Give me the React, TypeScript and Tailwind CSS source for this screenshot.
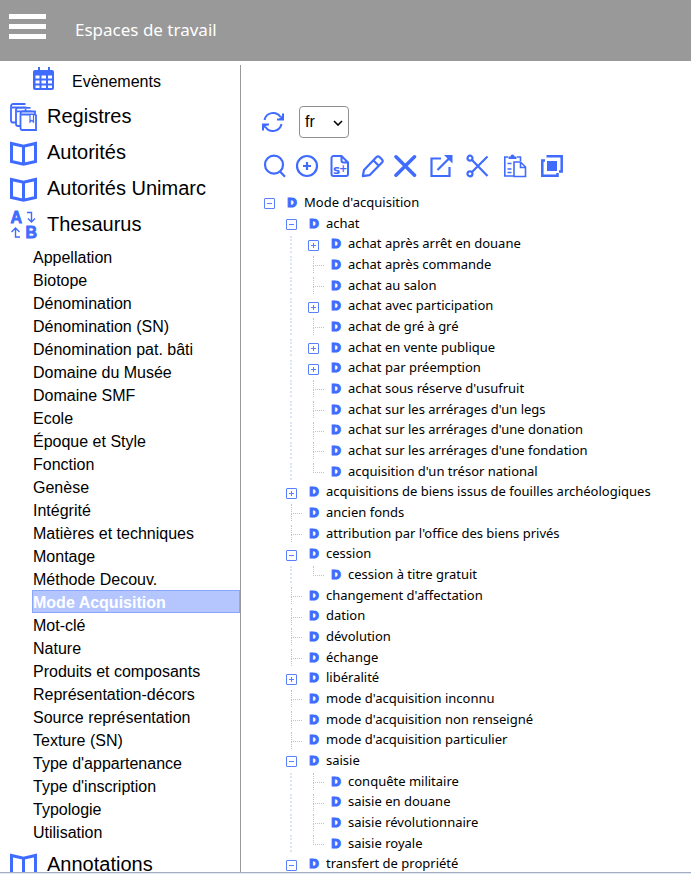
import { useState, type ReactNode } from 'react';
import clsx from 'clsx';

type Guide = 'tee' | 'end' | 'open' | 'closed';

interface TreeNode {
  label: string;
  depth: number;
  guide: Guide;
}

const THESAURUS = [
  'Appellation',
  'Biotope',
  'Dénomination',
  'Dénomination (SN)',
  'Dénomination pat. bâti',
  'Domaine du Musée',
  'Domaine SMF',
  'Ecole',
  'Époque et Style',
  'Fonction',
  'Genèse',
  'Intégrité',
  'Matières et techniques',
  'Montage',
  'Méthode Decouv.',
  'Mode Acquisition',
  'Mot-clé',
  'Nature',
  'Produits et composants',
  'Représentation-décors',
  'Source représentation',
  'Texture (SN)',
  "Type d'appartenance",
  "Type d'inscription",
  'Typologie',
  'Utilisation',
];

const TREE: TreeNode[] = [
  { label: "Mode d'acquisition", depth: 0, guide: 'open' },
  { label: 'achat', depth: 1, guide: 'open' },
  { label: 'achat après arrêt en douane', depth: 2, guide: 'closed' },
  { label: 'achat après commande', depth: 2, guide: 'tee' },
  { label: 'achat au salon', depth: 2, guide: 'tee' },
  { label: 'achat avec participation', depth: 2, guide: 'closed' },
  { label: 'achat de gré à gré', depth: 2, guide: 'tee' },
  { label: 'achat en vente publique', depth: 2, guide: 'closed' },
  { label: 'achat par préemption', depth: 2, guide: 'closed' },
  { label: "achat sous réserve d'usufruit", depth: 2, guide: 'tee' },
  { label: "achat sur les arrérages d'un legs", depth: 2, guide: 'tee' },
  { label: "achat sur les arrérages d'une donation", depth: 2, guide: 'tee' },
  { label: "achat sur les arrérages d'une fondation", depth: 2, guide: 'tee' },
  { label: "acquisition d'un trésor national", depth: 2, guide: 'end' },
  { label: 'acquisitions de biens issus de fouilles archéologiques', depth: 1, guide: 'closed' },
  { label: 'ancien fonds', depth: 1, guide: 'tee' },
  { label: "attribution par l'office des biens privés", depth: 1, guide: 'tee' },
  { label: 'cession', depth: 1, guide: 'open' },
  { label: 'cession à titre gratuit', depth: 2, guide: 'end' },
  { label: "changement d'affectation", depth: 1, guide: 'tee' },
  { label: 'dation', depth: 1, guide: 'tee' },
  { label: 'dévolution', depth: 1, guide: 'tee' },
  { label: 'échange', depth: 1, guide: 'tee' },
  { label: 'libéralité', depth: 1, guide: 'closed' },
  { label: "mode d'acquisition inconnu", depth: 1, guide: 'tee' },
  { label: "mode d'acquisition non renseigné", depth: 1, guide: 'tee' },
  { label: "mode d'acquisition particulier", depth: 1, guide: 'tee' },
  { label: 'saisie', depth: 1, guide: 'open' },
  { label: 'conquête militaire', depth: 2, guide: 'tee' },
  { label: 'saisie en douane', depth: 2, guide: 'tee' },
  { label: 'saisie révolutionnaire', depth: 2, guide: 'tee' },
  { label: 'saisie royale', depth: 2, guide: 'end' },
  { label: 'transfert de propriété', depth: 1, guide: 'open' },
];

function CalendarIcon() {
  return (
    <svg width="22" height="24" viewBox="0 0 22 24" fill="#406bff">
      <path d="M5 0h2v3h8V0h2v3h2a2 2 0 0 1 2 2v16a2 2 0 0 1-2 2H2a2 2 0 0 1-2-2V5a2 2 0 0 1 2-2h3z" />
      <path
        fill="#fff"
        d="M2.500 8.500h4v3h-4zM8.500 8.500h4.500v3H8.500zM15 8.500h4v3h-4zM2.500 13.500h4v3h-4zM8.500 13.500h4.500v3H8.500zM15 13.500h4v3h-4zM2.500 18.500h4V21h-4zM8.500 18.500h4.500V21H8.500zM15 18.500h4V21h-4z"
      />
    </svg>
  );
}

function RegistersIcon() {
  return (
    <svg width="27" height="28" viewBox="0 0 27 28" fill="#fff" stroke="#406bff" strokeWidth="1.800">
      <path d="M15.500 1H3a2 2 0 0 0-2 2V17.500a2 2 0 0 0 2 2H15.500V4.500H2" />
      <path d="M20.500 4.800H8a2 2 0 0 0-2 2V21a2 2 0 0 0 2 2H20.500V8.300H7" />
      <path d="M26 11.500V27H12.500a2 2 0 0 1-2-2V10.500a2 2 0 0 1 2-2H25V11.500H11.500" />
      <path d="M20 12v7l1.700-1.700L23.500 19v-7" strokeWidth="1.200" />
    </svg>
  );
}

function BookIcon() {
  return (
    <svg width="27" height="25" viewBox="0 0 27 25" fill="none" stroke="#406bff" strokeWidth="3">
      <path d="M1.500 2.500 13.500 5.300 25.500 2.500V20.500L13.500 23.200 1.500 20.500ZM13.500 5.300V23" />
    </svg>
  );
}

function ThesaurusIcon() {
  return (
    <svg
      width="28"
      height="32"
      viewBox="0 -2 28 32"
      fill="none"
      stroke="#406bff"
      strokeWidth="1.400"
      className="-mr-px overflow-visible"
    >
      <g fill="#406bff" strokeWidth=".8" fontFamily="'Liberation Sans', Arial, sans-serif" fontWeight="700" fontSize="16">
        <text x=".5" y="12">A</text>
        <text x="15.500" y="27">B</text>
      </g>
      <path d="M17 1.500h4.500v9M18 7.500l3.500 3.500L25 7.500M10 26H5.500V17.500M1.500 21l4-4 4 4" />
    </svg>
  );
}

function RefreshIcon() {
  return (
    <svg width="24" height="22" viewBox="0 0 24 22" fill="none" stroke="#406bff" strokeWidth="2">
      <path d="M3.500 9A8.800 8.800 0 0 1 19.500 6M20.500 13A8.800 8.800 0 0 1 4.500 16" />
      <path d="M22 2.500v6h-6M2 19.500v-6h6" />
      <path d="M22 3.500v5h-4.500zM2 18.500v-5h4.500z" fill="#406bff" stroke="none" />
    </svg>
  );
}

function Glyph({ children }: { children: ReactNode }) {
  return (
    <svg width="24" height="24" viewBox="0 0 24 24" fill="none" stroke="#406bff" strokeWidth="2.200">
      {children}
    </svg>
  );
}

const EDIT_TOOLS: { name: string; icon: ReactNode }[] = [
  {
    name: 'Rechercher',
    icon: <path d="M18 17.500 23 22.800M21 10.700a9 9 0 1 1-18 0 9 9 0 0 1 18 0Z" />,
  },
  {
    name: 'Ajouter',
    icon: (
      <>
        <circle cx="12" cy="12" r="10" />
        <path d="M12 8v8M8 12h8" />
      </>
    ),
  },
  {
    name: 'Ajouter un synonyme',
    icon: (
      <>
        <path
          strokeWidth="2"
          d="M13.500 2H5.500A2 2 0 0 0 3.500 4V20a2 2 0 0 0 2 2H18a2 2 0 0 0 2-2V8.500ZM13.500 2V6.500a2 2 0 0 0 2 2H20"
        />
        <g fill="#406bff" stroke="none" fontFamily="'DejaVu Sans', sans-serif" fontWeight="700">
          <text x="5" y="20" fontSize="12">s</text>
          <text x="11" y="18" fontSize="10">+</text>
        </g>
      </>
    ),
  },
  {
    name: 'Modifier',
    icon: (
      <path
        strokeLinejoin="round"
        d="M1.800 22.200 3 16 15.500 3a2.200 2.200 0 0 1 3 0L21 5.500a2.200 2.200 0 0 1 0 3L8.500 21.200ZM12.500 6.500l5.500 5.500"
      />
    ),
  },
  {
    name: 'Supprimer',
    icon: <path strokeWidth="3.500" strokeLinecap="round" d="M2 2.800 20.500 21.200M20.500 2.800 2 21.200" />,
  },
];

const CLIP_TOOLS: { name: string; icon: ReactNode }[] = [
  {
    name: 'Exporter',
    icon: (
      <>
        <path d="M12 4.500H2.500V22H20.500V13M8.500 16 21 3.500" />
        <path d="M15 1h8.500v8.500L20.500 6.500 18 4z" fill="#406bff" stroke="none" />
      </>
    ),
  },
  {
    name: 'Couper',
    icon: (
      <>
        <circle cx="4" cy="4.200" r="2.500" />
        <circle cx="4" cy="19.800" r="2.500" />
        <path d="M6 6 21.500 22M6 18 21.500 2.500" />
      </>
    ),
  },
  {
    name: 'Coller',
    icon: (
      <>
        <path strokeWidth="1.600" d="M10.500 22H1.800V3H5M14 3h3.500v4M11 8h6.500l5 5v9.500H11ZM17.500 8v5.500H23" />
        <path d="M5.500 2.500h2a2 2 0 0 1 4 0h2V5h-8z" fill="#406bff" stroke="none" />
        <path strokeWidth="1.500" d="M4.500 9.500h4M4.500 15h4M4.500 18.500h4" />
      </>
    ),
  },
  {
    name: 'Tout sélectionner',
    icon: (
      <>
        <rect x="7" y="7" width="10" height="10" fill="#406bff" stroke="none" />
        <path strokeWidth="2.500" d="M6.500 2.300H21.700V17.500H19M5 6.500H2.300V21.700H17.500V19" />
      </>
    ),
  },
];

function ToolButton({ name, children }: { name: string; children: ReactNode }) {
  return (
    <button type="button" aria-label={name} className="size-6">
      <Glyph>{children}</Glyph>
    </button>
  );
}

function MenuRow({ icon, label }: { icon: ReactNode; label: string }) {
  return (
    <a href="#" className="flex h-9 items-center gap-2.5 pl-2.5 text-xl">
      {icon}
      <span className="pb-0.5">{label}</span>
    </a>
  );
}

function Branch({ guide, label }: { guide: Guide; label: string }) {
  if (guide === 'open' || guide === 'closed') {
    return (
      <button
        type="button"
        aria-label={label}
        aria-expanded={guide === 'open'}
        className="flex h-full w-[22px] shrink-0 items-center justify-center pt-1"
      >
        <svg width="11" height="11" viewBox="0 0 11 11" fill="none" stroke="#5a80ff">
          <rect x=".5" y=".5" width="10" height="10" rx=".5" />
          <path d={guide === 'open' ? 'M3 5.500h5' : 'M3 5.500h5M5.500 3v5'} />
        </svg>
      </button>
    );
  }

  // dotted connector, cut short on the last child
  return (
    <span className="flex h-full w-[22px] shrink-0 flex-col pt-[3px] pl-[11px]">
      <span className="h-2.5 border-b border-l border-dotted border-[#b3c3ea]" />
      {guide === 'tee' && <span className="h-[7px] border-l border-dotted border-[#b3c3ea]" />}
    </span>
  );
}

function TreeRow({ node }: { node: TreeNode }) {
  return (
    <li className="flex h-[21px] items-center nth-[3n]:h-5">
      {node.depth > 0 && <span className="w-[22px] shrink-0" />}
      {node.depth > 1 && (
        <span className="flex h-full w-[22px] shrink-0 justify-center pt-[3px]">
          <span className="h-[17px] border-l-2 border-dotted border-[#dde4f3]" />
        </span>
      )}
      <Branch guide={node.guide} label={node.label} />
      <span
        aria-hidden="true"
        className="w-6 shrink-0 pt-0.5 text-center font-['DejaVu_Sans',sans-serif] text-xs leading-4 font-bold text-[#406bff] [-webkit-text-stroke:1px_#406bff]"
      >
        D
      </span>
      <a href="#" className="whitespace-nowrap">
        {node.label}
      </a>
    </li>
  );
}

export default function App() {
  const [selected, setSelected] = useState('Mode Acquisition');
  const [lang, setLang] = useState('fr');

  return (
    <div className="flex h-screen flex-col overflow-hidden border-b border-[#e3e9f1] bg-white font-['Liberation_Sans',Arial,sans-serif] text-black">
      <header className="flex h-[61px] shrink-0 items-center bg-[#999] pl-[9px]">
        <button type="button" aria-label="Menu" className="mb-2 flex w-[37px] flex-col gap-[5px]">
          <span className="h-[5px] bg-white" />
          <span className="h-[5px] bg-white" />
          <span className="h-[5px] bg-white" />
        </button>
        <h1 className="pb-0.5 pl-[29px] font-['Noto_Sans',sans-serif] text-[17px] text-white">Espaces de travail</h1>
      </header>

      <div className="flex min-h-0 flex-1 overflow-hidden border-b border-[#a3afc0] pt-1">
        {/* Navigation */}
        <nav className="w-[241px] shrink-0 overflow-hidden border-r border-[#999]">
          <a href="#" className="mb-0.5 flex h-8 items-center gap-[17px] pl-[33px]">
            <span className="pb-1">
              <CalendarIcon />
            </span>
            <span className="pt-0.5">Evènements</span>
          </a>
          <MenuRow icon={<RegistersIcon />} label="Registres" />
          <MenuRow icon={<BookIcon />} label="Autorités" />
          <MenuRow icon={<BookIcon />} label="Autorités Unimarc" />
          <MenuRow icon={<ThesaurusIcon />} label="Thesaurus" />
          <ul className="mt-0.5 mb-1 pl-8">
            {THESAURUS.map((item) => (
              <li key={item}>
                <a
                  href="#"
                  onClick={() => setSelected(item)}
                  className={clsx(
                    'flex h-[23px] items-center border pt-0.5',
                    item === selected ? 'border-[#8aa5ff] bg-[#b5c6ff] font-bold text-white' : 'border-transparent'
                  )}
                >
                  {item}
                </a>
              </li>
            ))}
          </ul>
          <MenuRow icon={<BookIcon />} label="Annotations" />
        </nav>

        {/* Thesaurus tree */}
        <main className="min-w-0 flex-1 overflow-hidden pt-[41px]">
          <div className="flex items-center gap-3.5 pl-5">
            <button type="button" aria-label="Actualiser">
              <RefreshIcon />
            </button>
            <div className="relative">
              <select
                aria-label="Langue"
                value={lang}
                onChange={(e) => setLang(e.target.value)}
                className="block h-8 w-[50px] appearance-none rounded border border-[#8f8f8f] bg-white pl-[5px] text-base"
              >
                <option value="fr">fr</option>
                <option value="en">en</option>
              </select>
              <svg
                width="10"
                height="6"
                viewBox="0 0 10 6"
                fill="none"
                stroke="#000"
                strokeWidth="1.600"
                className="pointer-events-none absolute top-3.5 right-1.5"
              >
                <path d="M1 1l4 4 4-4" />
              </svg>
            </div>
          </div>

          <div className="mt-4 flex gap-[11px] pl-[21px]">
            <div className="flex gap-[9px]">
              {EDIT_TOOLS.map((tool) => (
                <ToolButton key={tool.name} name={tool.name}>
                  {tool.icon}
                </ToolButton>
              ))}
            </div>
            <div className="flex gap-[13px]">
              {CLIP_TOOLS.map((tool) => (
                <ToolButton key={tool.name} name={tool.name}>
                  {tool.icon}
                </ToolButton>
              ))}
            </div>
          </div>

          <ul className="mt-[13px] pl-[17px] font-['Noto_Sans',sans-serif] text-[13px] leading-5">
            {TREE.map((node) => (
              <TreeRow key={node.label} node={node} />
            ))}
          </ul>
        </main>
      </div>
    </div>
  );
}
